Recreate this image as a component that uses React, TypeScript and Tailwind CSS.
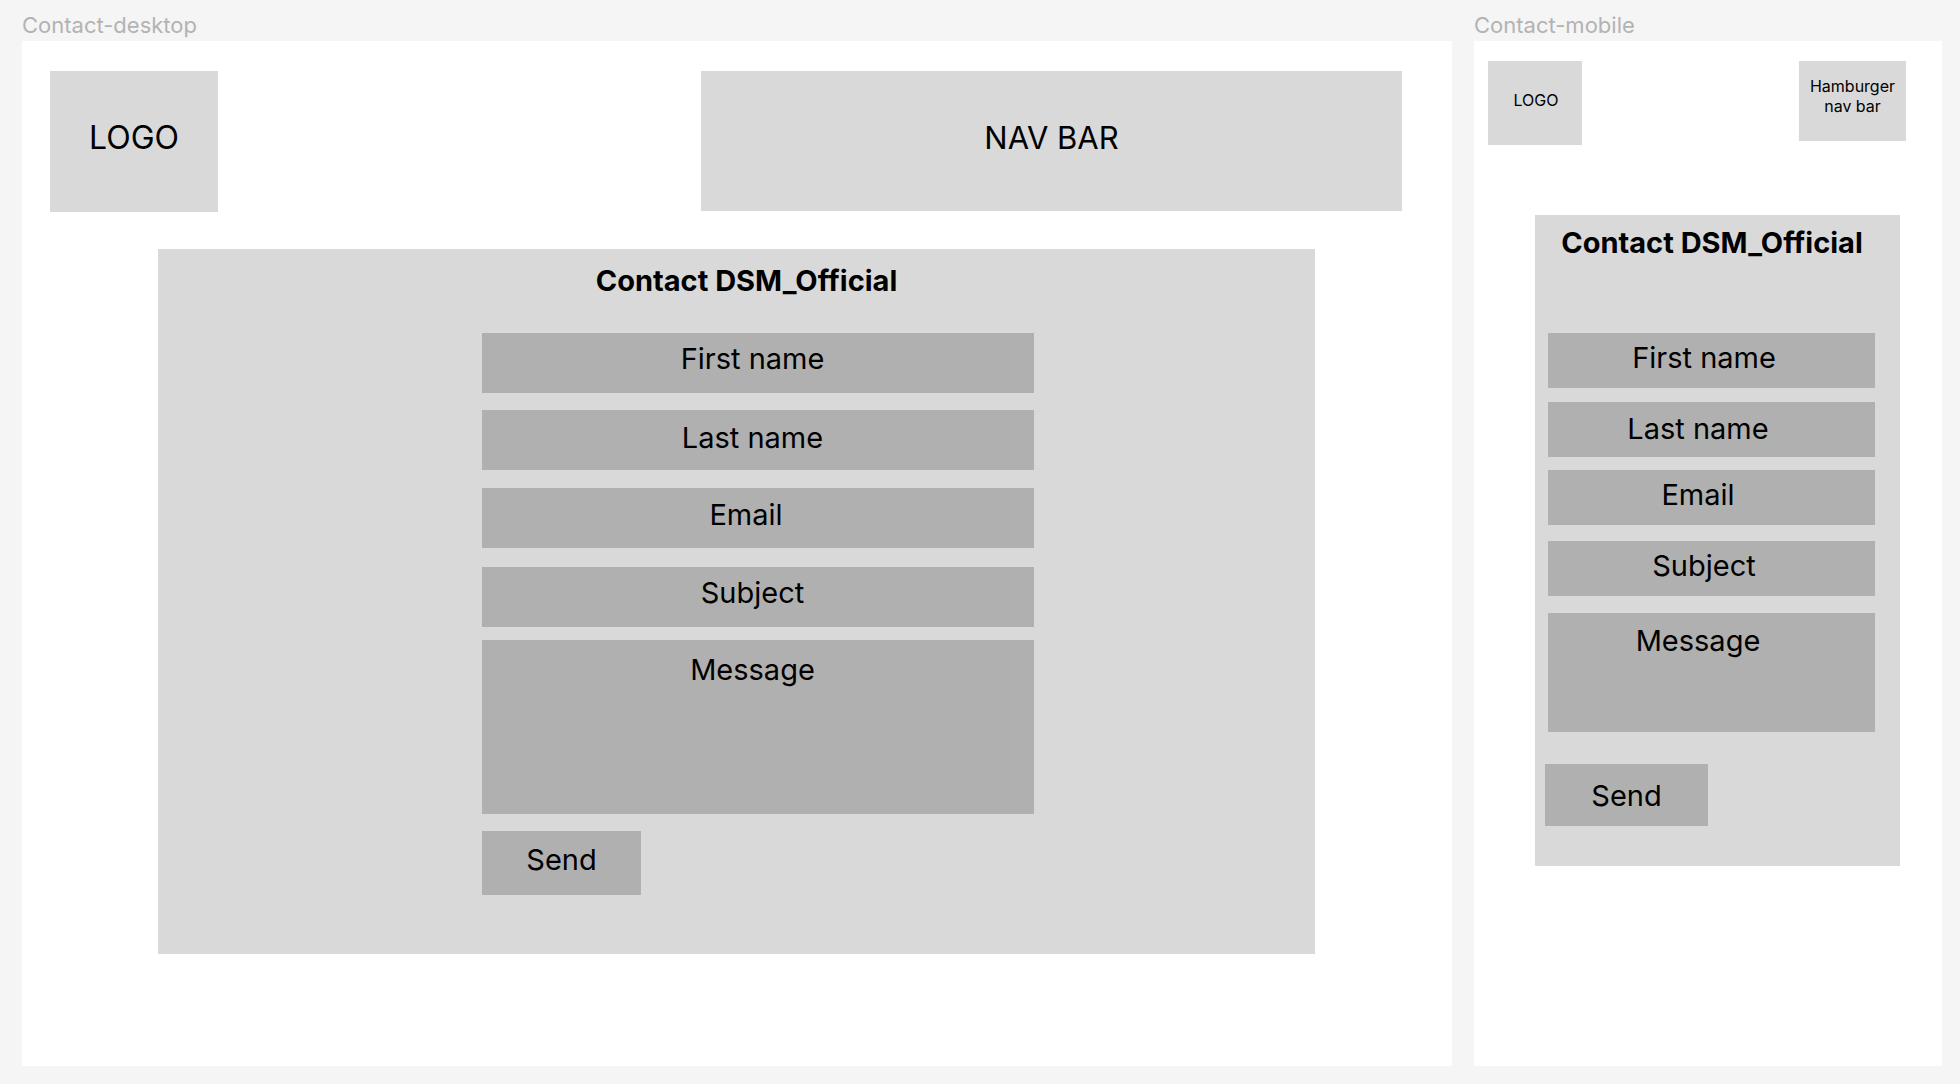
const desktopFields = [
  { label: 'First name', mt: 'mt-[35px]', pr: 'pr-[11px]', pt: 'pt-[9px]' },
  { label: 'Last name', mt: 'mt-[17px]', pr: 'pr-[11px]', pt: 'pt-[11px]' },
  { label: 'Email', mt: 'mt-[18px]', pr: 'pr-[24px]', pt: 'pt-[10px]' },
  { label: 'Subject', mt: 'mt-[19px]', pr: 'pr-[11px]', pt: 'pt-[9px]' },
];

const mobileFields = [
  { label: 'First name', mt: 'mt-[73px]', pr: 'pr-[15px]', pt: 'pt-[8px]' },
  { label: 'Last name', mt: 'mt-[14px]', pr: 'pr-[27px]', pt: 'pt-[10px]' },
  { label: 'Email', mt: 'mt-[13px]', pr: 'pr-[27px]', pt: 'pt-[8px]' },
  { label: 'Subject', mt: 'mt-[16px]', pr: 'pr-[15px]', pt: 'pt-[8px]' },
];

function FrameLabel({ children }: { children: string }) {
  return <div className="mb-[3px] text-[22px] leading-[26px] text-[#b3b3b3]">{children}</div>;
}

function DesktopFrame() {
  return (
    <div className="flex w-[1430px] flex-col">
      <FrameLabel>Contact-desktop</FrameLabel>
      <div className="h-[1025px] bg-white pl-[28px] pt-[30px]">
        {/* header */}
        <div className="flex items-start">
          <div className="flex h-[141px] w-[168px] items-start justify-center bg-[#d9d9d9] pt-[48px] text-[32px] leading-[38px]">
            LOGO
          </div>
          <div className="ml-[483px] flex h-[140px] w-[701px] items-start justify-center bg-[#d9d9d9] pt-[48px] text-[31px] leading-[38px]">
            NAV BAR
          </div>
        </div>

        {/* contact box */}
        <div className="ml-[108px] mt-[37px] flex h-[705px] w-[1157px] flex-col bg-[#d9d9d9] pt-[15px]">
          <div className="pl-[20px] text-center text-[29px] font-bold leading-[34px]">Contact DSM_Official</div>
          <div className="flex flex-col items-start pl-[324px]">
            {desktopFields.map((f) => (
              <div
                key={f.label}
                className={`${f.mt} ${f.pr} ${f.pt} h-[60px] w-[552px] bg-[#b0b0b0] text-center text-[29px] leading-[34px]`}
              >
                {f.label}
              </div>
            ))}
            <div className="mt-[13px] h-[174px] w-[552px] bg-[#b0b0b0] pr-[11px] pt-[13px] text-center text-[29px] leading-[34px]">
              Message
            </div>
            <div className="mt-[17px] h-[64px] w-[159px] bg-[#b0b0b0] pt-[12px] text-center text-[29px] leading-[34px]">
              Send
            </div>
          </div>
        </div>
      </div>
    </div>
  );
}

function MobileFrame() {
  return (
    <div className="flex w-[468px] flex-col">
      <FrameLabel>Contact-mobile</FrameLabel>
      <div className="h-[1025px] bg-white pt-[20px]">
        {/* header */}
        <div className="flex items-start justify-between pl-[14px] pr-[36px]">
          <div className="flex h-[84px] w-[94px] items-start justify-center bg-[#d9d9d9] pl-[2px] pt-[29px] text-[16px] leading-[20px]">
            LOGO
          </div>
          <div className="h-[80px] w-[107px] bg-[#d9d9d9] pt-[15px] text-center text-[16px] leading-[20px]">
            Hamburger
            <br />
            nav bar
          </div>
        </div>

        {/* contact box */}
        <div className="ml-[61px] mt-[70px] flex h-[651px] w-[365px] flex-col bg-[#d9d9d9] pt-[11px]">
          <div className="pr-[11px] text-center text-[29px] font-bold leading-[34px]">Contact DSM_Official</div>
          <div className="flex flex-col items-start pl-[13px]">
            {mobileFields.map((f) => (
              <div
                key={f.label}
                className={`${f.mt} ${f.pr} ${f.pt} h-[55px] w-[327px] bg-[#b0b0b0] text-center text-[29px] leading-[34px]`}
              >
                {f.label}
              </div>
            ))}
            <div className="mt-[17px] h-[119px] w-[327px] bg-[#b0b0b0] pr-[27px] pt-[11px] text-center text-[29px] leading-[34px]">
              Message
            </div>
            <div className="-ml-[3px] mt-[32px] h-[62px] w-[163px] bg-[#b0b0b0] pt-[15px] text-center text-[29px] leading-[34px]">
              Send
            </div>
          </div>
        </div>
      </div>
    </div>
  );
}

export default function App() {
  return (
    <div className="flex min-h-[1084px] w-[1960px] items-start gap-[22px] bg-[#f5f5f5] pl-[22px] pt-[12px] font-['Inter',sans-serif] text-black">
      <DesktopFrame />
      <MobileFrame />
    </div>
  );
}
